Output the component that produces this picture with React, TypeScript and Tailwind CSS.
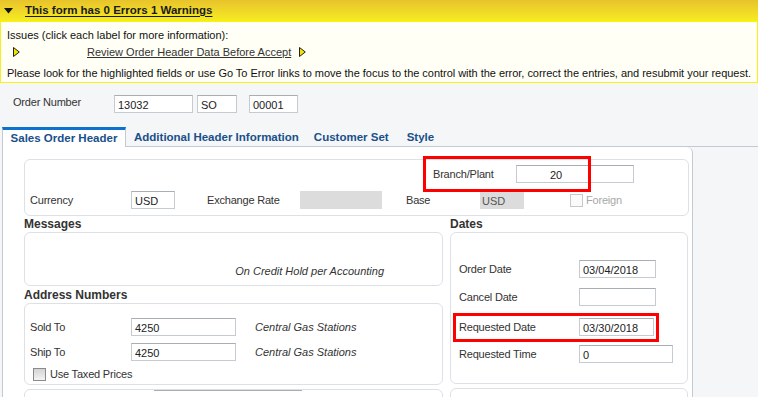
import React from "react";

const F = { fontFamily: '"Liberation Sans", Arial, sans-serif' };

function Input({ w, value, className = "", pad = "pl-[3px]" }: { w: string; value?: string; className?: string; pad?: string }) {
  return (
    <div
      className={`${w} h-[18px] bg-white border border-[#c6cbd1] border-t-[#a9aeb4] flex items-center ${pad} text-[11px] text-[#222] leading-none pt-[2px] ${className}`}
    >
      {value}
    </div>
  );
}

function RightTri({ className = "" }: { className?: string }) {
  return (
    <svg width="7" height="10" viewBox="0 0 7 10" className={className}>
      <path d="M0.5 0.5 L6.3 5 L0.5 9.5 Z" fill="#f3e400" stroke="#222" strokeWidth="1" />
    </svg>
  );
}

function Checkbox({ disabled = false }: { disabled?: boolean }) {
  return (
    <div
      className={`w-[13px] h-[13px] border ${disabled ? "border-[#c8c8c8] bg-[#fafafa]" : "border-[#8a8a8a] bg-gradient-to-b from-[#d4d4d4] to-[#f4f4f4]"}`}
    />
  );
}

const L = "text-[11px] tracking-[-0.2px] text-[#333]";

export default function App() {
  return (
    <div style={F} className="w-[758px] h-[397px] overflow-hidden bg-[#f5f6f8] text-[#333] text-[11px] relative">
      {/* Warning header */}
      <div className="h-[22px] bg-gradient-to-b from-[#e8c32b] to-[#f5ec22] flex items-center border-b border-[#fbf600]">
        <svg width="9" height="6" viewBox="0 0 9 6" className="ml-[4px] mr-[12px]">
          <path d="M0 0 H9 L4.5 5.5 Z" fill="#111" />
        </svg>
        <span className="font-bold text-[11.5px] text-[#1a1a1a] underline underline-offset-2">This form has 0 Errors 1 Warnings</span>
      </div>
      <div className="h-[61px] bg-[#fffff6] border-x border-b border-[#f7ef1e] pl-[6px] pt-[6px] text-[#111] text-[11px] leading-[14px]">
        <div>Issues (click each label for more information):</div>
        <div className="flex items-center mt-[2px] h-[16px]">
          <RightTri className="ml-[6px]" />
          <span className="ml-[67px] underline text-[#333]">Review Order Header Data Before Accept</span>
          <RightTri className="ml-[8px]" />
        </div>
        <div className="mt-[6px] whitespace-nowrap tracking-[-0.03px]">Please look for the highlighted fields or use Go To Error links to move the focus to the control with the error, correct the entries, and resubmit your request.</div>
      </div>

      {/* Order number */}
      <div className="flex items-start pl-[13px] mt-[12px] h-[18px]">
        <span className={`w-[101px] leading-[14px] ${L}`}>Order Number</span>
        <Input w="w-[79px]" value="13032" />
        <Input w="w-[40px]" value="SO" className="ml-[4px]" />
        <Input w="w-[49px]" value="00001" className="ml-[12px]" />
      </div>

      {/* Tabs */}
      <div className="flex items-end mt-[14px] h-[20px] text-[11.5px]">
        <div className="ml-[2px] w-[124px] h-[20px] bg-white border-t-[3px] border-t-[#0b72d0] border-x border-x-[#c4cad2] flex items-center justify-center font-bold text-[#19508a] pt-[1px]">
          Sales Order Header
        </div>
        <div className="flex-1 h-[20px] border-b border-[#c4cad2] flex items-start font-bold text-[#19508a] pt-[2px]">
          <span className="ml-[8px]">Additional Header Information</span>
          <span className="ml-[15px]">Customer Set</span>
          <span className="ml-[18px]">Style</span>
        </div>
      </div>

      {/* Panel */}
      <div className="ml-[2px] w-[691px] h-[260px] bg-white border-x border-[#c4cad2] rounded-tr-[6px] pl-[21px] pr-[3px] pt-[12px]">
        {/* Box 1 */}
        <div className="relative h-[57px] border border-[#dde1e6] rounded-[6px]">
          <div className="flex items-center h-[18px] mt-[5px]">
            <span className={`ml-[408px] w-[83px] ${L}`}>Branch/Plant</span>
            <Input w="w-[118px]" value="20" pad="pl-[33px]" />
          </div>
          <div className="flex items-center h-[18px] mt-[8px]">
            <span className={`ml-[5px] w-[101px] ${L}`}>Currency</span>
            <Input w="w-[44px]" value="USD" />
            <span className={`ml-[32px] w-[93px] ${L}`}>Exchange Rate</span>
            <div className="w-[82px] h-[18px] bg-[#dcdcdc]" />
            <span className={`ml-[24px] w-[74px] ${L}`}>Base</span>
            <div className="w-[44px] h-[18px] bg-[#dcdcdc] flex items-center pl-[2px] pt-[2px] text-[#555]">USD</div>
            <div className="ml-[46px]"><Checkbox disabled /></div>
            <span className="ml-[3px] text-[11px] tracking-[-0.2px] text-[#a8a8a8]">Foreign</span>
          </div>
          <div className="absolute left-[398px] top-[-4px] w-[168px] h-[36px] border-[3px] border-[#ff0000]" />
        </div>

        <div className="flex gap-[7px]">
          {/* Left column */}
          <div className="w-[419px]">
            <div className="font-bold text-[12px] text-[#333] h-[16px] leading-[16px]">Messages</div>
            <div className="h-[54px] border border-[#dde1e6] rounded-[6px] flex items-end justify-end pr-[58px] pb-[6px]">
              <span className="italic text-[#333]">On Credit Hold per Accounting</span>
            </div>
            <div className="font-bold text-[12px] text-[#333] h-[16px] leading-[16px] mt-[1px]">Address Numbers</div>
            <div className="h-[82px] border border-[#dde1e6] rounded-[6px] pl-[5px] pt-[14px]">
              <div className="flex items-center h-[18px]">
                <span className={`w-[101px] ${L}`}>Sold To</span>
                <Input w="w-[105px]" value="4250" />
                <span className="ml-[19px] italic">Central Gas Stations</span>
              </div>
              <div className="flex items-center h-[18px] mt-[7px]">
                <span className={`w-[101px] ${L}`}>Ship To</span>
                <Input w="w-[105px]" value="4250" />
                <span className="ml-[19px] italic">Central Gas Stations</span>
              </div>
              <div className="flex items-center mt-[5px] ml-[3px]">
                <Checkbox />
                <span className={`ml-[4px] ${L}`}>Use Taxed Prices</span>
              </div>
            </div>
            <div className="mt-[4px] h-[30px] border border-[#dde1e6] rounded-[6px] pl-[129px]">
              <div className="w-[148px] h-[18px] border-t border-[#a9aeb4] bg-white" />
            </div>
          </div>
          {/* Right column */}
          <div className="w-[238px]">
            <div className="font-bold text-[12px] text-[#333] h-[16px] leading-[16px]">Dates</div>
            <div className="relative h-[152px] border border-[#dde1e6] rounded-[6px] pl-[8px] pt-[27px]">
              <div className="flex items-center h-[18px]">
                <span className={`w-[120px] ${L}`}>Order Date</span>
                <Input w="w-[77px]" value="03/04/2018" />
              </div>
              <div className="flex items-center h-[18px] mt-[10px]">
                <span className={`w-[120px] ${L}`}>Cancel Date</span>
                <Input w="w-[77px]" />
              </div>
              <div className="flex items-center h-[18px] mt-[12px]">
                <span className={`w-[120px] ${L}`}>Requested Date</span>
                <Input w="w-[75px]" value="03/30/2018" />
              </div>
              <div className="flex items-center h-[18px] mt-[9px]">
                <span className={`w-[120px] ${L}`}>Requested Time</span>
                <Input w="w-[94px]" value="0" />
              </div>
              <div className="absolute left-[2px] top-[80px] w-[206px] h-[29px] border-[3px] border-[#ff0000]" />
            </div>
            <div className="mt-[4px] h-[30px] border border-[#dde1e6] rounded-[6px]" />
          </div>
        </div>
      </div>
    </div>
  );
}
